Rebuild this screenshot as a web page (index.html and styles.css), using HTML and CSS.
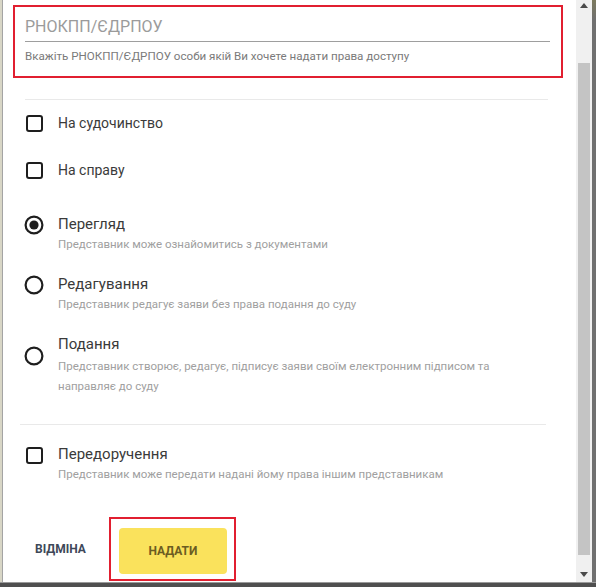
FILE: index.html
```html
<!DOCTYPE html>
<html lang="uk">
<head>
<meta charset="utf-8">
<title>Надання доступу</title>
<link rel="stylesheet" href="styles.css">
</head>
<body>
<div class="screen">
  <div class="main">
    <div class="edge"></div>
    <div class="dialog">
      <div class="field hl">
        <div class="input">РНОКПП/ЄДРПОУ</div>
        <div class="helper">Вкажіть РНОКПП/ЄДРПОУ особи якій Ви хочете надати права доступу</div>
      </div>
      <div class="divider d1"></div>

      <div class="row simple r1">
        <span class="icon"><span class="box"></span></span>
        <span class="label">На судочинство</span>
      </div>
      <div class="row simple r2">
        <span class="icon"><span class="box"></span></span>
        <span class="label">На справу</span>
      </div>

      <div class="row rich r3">
        <span class="icon up">
          <svg width="20" height="20" viewBox="0 0 20 20"><circle cx="10" cy="10" r="8.4" fill="none" stroke="#1e1e1e" stroke-width="2.2"/><circle cx="10" cy="10" r="4.6" fill="#1e1e1e"/></svg>
        </span>
        <div class="text">
          <div class="title">Перегляд</div>
          <div class="desc">Представник може ознайомитись з документами</div>
        </div>
      </div>
      <div class="row rich r4">
        <span class="icon up">
          <svg width="20" height="20" viewBox="0 0 20 20"><circle cx="10" cy="10" r="8.4" fill="none" stroke="#1e1e1e" stroke-width="2.2"/></svg>
        </span>
        <div class="text">
          <div class="title">Редагування</div>
          <div class="desc">Представник редагує заяви без права подання до суду</div>
        </div>
      </div>
      <div class="row rich r5">
        <span class="icon up">
          <svg width="20" height="20" viewBox="0 0 20 20"><circle cx="10" cy="10" r="8.4" fill="none" stroke="#1e1e1e" stroke-width="2.2"/></svg>
        </span>
        <div class="text">
          <div class="title">Подання</div>
          <div class="desc">Представник створює, редагує, підписує заяви своїм електронним підписом та направляє до суду</div>
        </div>
      </div>

      <div class="divider d2"></div>

      <div class="row rich r6">
        <span class="icon up"><span class="box"></span></span>
        <div class="text">
          <div class="title">Передоручення</div>
          <div class="desc">Представник може передати надані йому права іншим представникам</div>
        </div>
      </div>

      <div class="actions">
        <span class="cancel">ВІДМІНА</span>
        <div class="hl btnwrap">
          <span class="submit">НАДАТИ</span>
        </div>
      </div>
    </div>
    <div class="scrollbar">
      <div class="arrow">
        <svg width="8" height="5" viewBox="0 0 8 5"><polygon points="0,5 8,5 4,0" fill="#4a4a4a"/></svg>
      </div>
      <div class="thumb"></div>
      <div class="arrow down">
        <svg width="8" height="5" viewBox="0 0 8 5"><polygon points="0,0 8,0 4,5" fill="#4a4a4a"/></svg>
      </div>
    </div>
    <div class="rim"></div>
  </div>
  <div class="bottom"></div>
</div>
</body>
</html>
```

FILE: styles.css
```css
* { box-sizing: border-box; }
html, body { margin: 0; padding: 0; }
body {
  width: 596px;
  height: 587px;
  overflow: hidden;
  background: #ffffff;
  font-family: Roboto, "Noto Sans", "Liberation Sans", sans-serif;
}
.screen {
  width: 596px;
  height: 587px;
  display: flex;
  flex-direction: column;
}
.main {
  height: 582px;
  display: flex;
}
.edge {
  width: 3px;
  background: #d8d6c6;
  border-right: 1px solid #a4a4a4;
}
.dialog {
  flex: 1;
  background: #ffffff;
  padding: 5px 13px 0 10px;
  display: flex;
  flex-direction: column;
}
.hl {
  border: 2px solid #e11f30;
}
.field {
  padding: 10px 11px 13px 10px;
}
.input {
  font-size: 16px;
  line-height: 20px;
  color: #9b9b9b;
  padding-bottom: 4px;
  border-bottom: 1px solid #9e9e9e;
}
.helper {
  margin-top: 7px;
  font-size: 11.6px;
  line-height: 14px;
  color: #7a7a7a;
}
.divider {
  height: 1px;
  background: #e9e9e9;
}
.d1 { margin: 21px 15px 0 12px; }
.d2 { margin: 28px 17px 0 7px; }

.row {
  display: flex;
  align-items: center;
  padding-left: 11px;
}
.icon {
  width: 20px;
  height: 20px;
  flex: none;
  display: flex;
  align-items: center;
  justify-content: center;
}
.icon svg { display: block; }
.icon.up { margin-bottom: 18px; }
.box {
  width: 17px;
  height: 17px;
  border: 2px solid #1e1e1e;
  border-radius: 3px;
}
.label {
  margin-left: 14px;
  font-size: 14px;
  line-height: 24px;
  color: #3a3a3a;
}
.text {
  margin-left: 14px;
}
.title {
  font-size: 15px;
  line-height: 20px;
  color: #3a3a3a;
}
.desc {
  font-size: 11.5px;
  line-height: 20px;
  color: #a0a0a0;
  max-width: 460px;
}
.r1 { margin-top: 11px; }
.r2 { margin-top: 23px; }
.r3 { margin-top: 32px; }
.r4 { margin-top: 20px; }
.r5 { margin-top: 20px; }
.r6 { margin-top: 19px; }
.r5 .desc { padding-top: 2px; }

.actions {
  margin-top: 33px;
  display: flex;
  align-items: center;
}
.cancel {
  margin-left: 22px;
  font-size: 12px;
  font-weight: 700;
  color: #3e4859;
}
.btnwrap {
  margin-left: 23px;
  padding: 9px 7px 5px 8px;
}
.submit {
  display: flex;
  align-items: center;
  justify-content: center;
  width: 108px;
  height: 46px;
  border-radius: 4px;
  background: #fae25c;
  font-size: 12px;
  font-weight: 700;
  color: #6b5c22;
}

.scrollbar {
  width: 16px;
  background: #f0f0f0;
  display: flex;
  flex-direction: column;
  align-items: center;
}
.arrow {
  height: 17px;
  display: flex;
  align-items: center;
  justify-content: center;
  width: 100%;
  padding-bottom: 6px;
}
.arrow.down {
  padding-bottom: 0;
  padding-top: 2px;
}
.thumb {
  margin-top: 46px;
  width: 12px;
  height: 492px;
  background: #c4c4c4;
}
.scrollbar .down { margin-top: auto; }
.rim {
  width: 4px;
  background: linear-gradient(#7c7a5e, #707070 20px, #707070);
}
.bottom {
  height: 5px;
  background: #4f4f4f;
  border-top: 1px solid #9a9a9a;
}
```
